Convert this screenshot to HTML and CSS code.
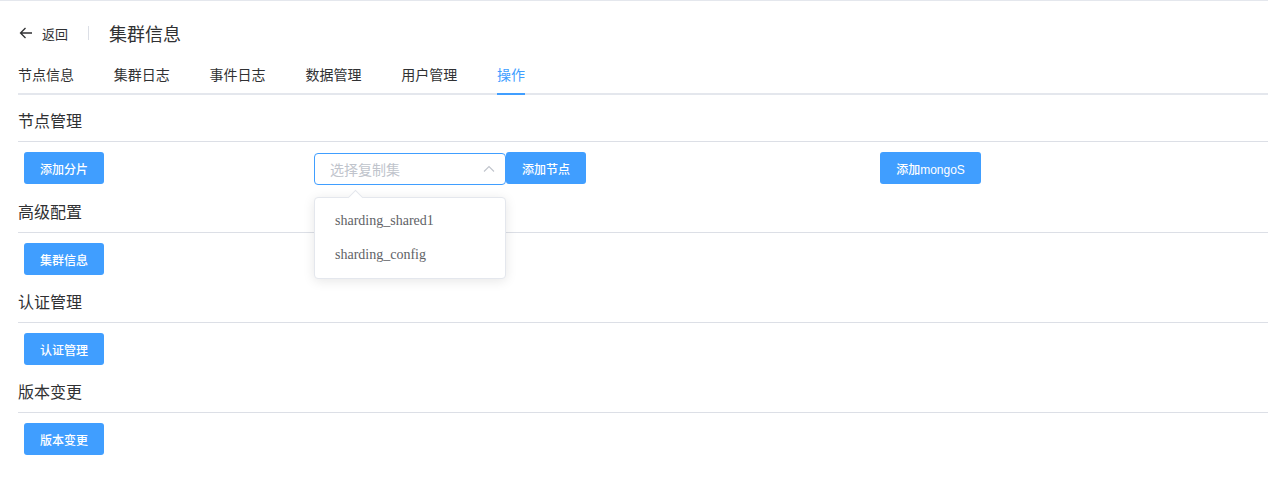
FILE: index.html
```html
<!DOCTYPE html>
<html lang="zh-CN">
<head>
    <meta charset="UTF-8">
    <title>集群信息</title>
    <link rel="stylesheet" href="styles.css">
</head>
<body>
    <div class="page">
        <div class="page-header">
            <a class="back" href="#">
                <svg width="14" height="14" viewBox="0 0 14 14"><path d="M13 7H1.5M6.5 2L1.5 7l5 5" fill="none" stroke="#303133" stroke-width="1.3"/></svg>
                <span>返回</span>
            </a>
            <span class="header-divider"></span>
            <span class="title">集群信息</span>
        </div>

        <div class="tabs">
            <div class="tab">节点信息</div>
            <div class="tab">集群日志</div>
            <div class="tab">事件日志</div>
            <div class="tab">数据管理</div>
            <div class="tab">用户管理</div>
            <div class="tab active">操作</div>
        </div>

        <div class="section">
            <div class="section-title">节点管理</div>
            <div class="section-body node-row">
                <button class="btn">添加分片</button>
                <div class="select-group">
                    <div class="select">
                        <span class="placeholder">选择复制集</span>
                        <svg class="arrow" width="12" height="12" viewBox="0 0 12 12"><path d="M1 8.5L6 3.5l5 5" fill="none" stroke="#c0c4cc" stroke-width="1.1"/></svg>
                        <div class="dropdown">
                            <div class="dropdown-item">sharding_shared1</div>
                            <div class="dropdown-item">sharding_config</div>
                        </div>
                    </div>
                    <button class="btn">添加节点</button>
                </div>
                <button class="btn btn-wide">添加mongoS</button>
            </div>
        </div>

        <div class="section">
            <div class="section-title">高级配置</div>
            <div class="section-body">
                <button class="btn">集群信息</button>
            </div>
        </div>

        <div class="section">
            <div class="section-title">认证管理</div>
            <div class="section-body">
                <button class="btn">认证管理</button>
            </div>
        </div>

        <div class="section">
            <div class="section-title">版本变更</div>
            <div class="section-body">
                <button class="btn">版本变更</button>
            </div>
        </div>
    </div>
</body>
</html>
```

FILE: styles.css
```css
* {
    margin: 0;
    padding: 0;
    box-sizing: border-box;
}

body {
    font-family: "Noto Sans CJK SC", "Liberation Sans", sans-serif;
    background: #fff;
    color: #303133;
    border-top: 1px solid #e4e7ed;
}

.page {
    padding: 12px 0 0 18px;
}

.page-header {
    display: flex;
    align-items: center;
    height: 40px;
    margin-bottom: 2px;
}

.back {
    display: flex;
    align-items: center;
    gap: 9px;
    color: #303133;
    text-decoration: none;
    font-size: 13px;
    margin-left: 1px;
}

.header-divider {
    width: 1px;
    height: 14px;
    background: #dcdfe6;
    margin: 0 20px;
}

.title {
    font-size: 18px;
    color: #303133;
}

.tabs {
    display: flex;
    gap: 39.8px;
    border-bottom: 2px solid #e4e7ed;
    height: 40px;
}

.tab {
    font-size: 14px;
    line-height: 38px;
    color: #303133;
}

.tab.active {
    color: #409eff;
    border-bottom: 2px solid #409eff;
    height: 40px;
}

.section {
    margin-top: 7px;
}

.section + .section {
    margin-top: 0;
}

.section-title {
    font-family: "Liberation Serif", "Noto Sans CJK SC", serif;
    font-size: 16px;
    height: 40px;
    line-height: 40px;
    border-bottom: 1px solid #dcdfe6;
    color: #303133;
}

.section-body {
    padding: 10px 6px 8px;
}

.node-row {
    display: grid;
    grid-template-columns: 290px 566px auto;
    align-items: start;
}

.btn {
    height: 32px;
    width: 80px;
    border: none;
    border-radius: 3px;
    background: #409eff;
    color: #fff;
    font-family: "Liberation Sans", "Noto Sans CJK SC", sans-serif;
    font-size: 12px;
    font-weight: 500;
    cursor: pointer;
}

.btn-wide {
    width: 101px;
}

.select-group {
    display: flex;
}

.select {
    position: relative;
    width: 192px;
    height: 32px;
    margin-top: 1px;
    border: 1px solid #409eff;
    border-radius: 4px;
    display: flex;
    align-items: center;
    padding: 0 10px 0 15px;
}

.placeholder {
    flex: 1;
    font-size: 14px;
    color: #c0c4cc;
}

.dropdown {
    position: absolute;
    top: 43px;
    left: -1px;
    width: 192px;
    background: #fff;
    border: 1px solid #e4e7ed;
    border-radius: 4px;
    box-shadow: 0 2px 12px rgba(0, 0, 0, 0.1);
    padding: 6px 0;
    z-index: 10;
}

.dropdown::before {
    content: '';
    position: absolute;
    top: -6px;
    left: 35px;
    width: 10px;
    height: 10px;
    background: #fff;
    border-left: 1px solid #e4e7ed;
    border-top: 1px solid #e4e7ed;
    transform: rotate(45deg);
}

.dropdown-item {
    font-family: "Liberation Serif", serif;
    font-size: 14px;
    color: #606266;
    height: 34px;
    line-height: 34px;
    padding: 0 20px;
}
```
